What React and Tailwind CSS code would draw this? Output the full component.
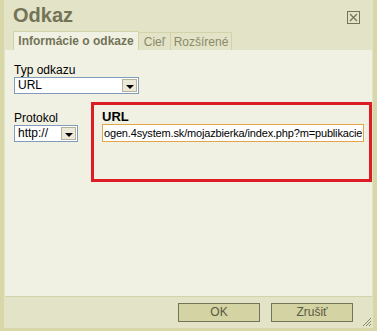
import React from 'react';

function Select({ value, width }) {
  return (
    <div
      className="flex items-stretch h-[17px] bg-white border border-[#7f9db9]"
      style={{ width }}
    >
      <div className="flex-1 pl-[3px] text-[12px] leading-[15px] text-black">{value}</div>
      <div className="w-[15px] my-[1px] mr-[1px] flex items-center justify-center bg-[#ece9d8] border border-[#b5b2a0]">
        <div className="w-0 h-0 border-l-[4px] border-r-[4px] border-t-[4px] border-l-transparent border-r-transparent border-t-black mt-[3px]" />
      </div>
    </div>
  );
}

export default function App() {
  return (
    <div
      className="w-[377px] h-[333px] bg-white overflow-hidden"
      style={{ fontFamily: '"Liberation Sans", Arial, sans-serif' }}
    >
      <div className="w-[377px] h-[331px] bg-[#e3e3c7] border-l-[4px] border-r-[4px] border-b-[3px] border-[#d7d7a9] flex flex-col">
        {/* title */}
        <div className="h-[31px] flex items-start justify-between pl-[9px] pr-[13px]">
          <div className="text-[20px] font-bold text-[#737357] leading-[24px] mt-[3px]">Odkaz</div>
          <div className="mt-[11px] w-[13px] h-[13px] border border-[#737357] flex items-center justify-center">
            <svg width="9" height="9" viewBox="0 0 9 9">
              <path d="M1 1L8 8M8 1L1 8" stroke="#737357" strokeWidth="1.2" />
            </svg>
          </div>
        </div>
        {/* tabs */}
        <div className="h-[19px] flex items-end pl-[9px] text-[12px] leading-[18px]">
          <div className="h-[19px] w-[126px] text-center bg-[#f1f1e3] border border-b-0 border-[#d3d3a9] font-bold text-[#737357]">
            Informácie o odkaze
          </div>
          <div className="h-[18px] w-[32px] text-center border border-b-0 border-l-0 border-[#d3d3a9] text-[#8a8a6a]">Cieľ</div>
          <div className="h-[18px] w-[61px] text-center border border-b-0 border-l-0 border-[#d3d3a9] text-[#8a8a6a]">Rozšírené</div>
        </div>
        {/* panel */}
        <div className="mx-[1px] h-[247px] bg-[#f1f1e3] border-b border-[#d3d3a9] pl-[9px] pt-[13px] text-[12px] text-black">
          <div className="leading-[14px]">Typ odkazu</div>
          <Select value="URL" width="125px" />
          <div className="flex mt-[8px]">
            <div className="pt-[9px]">
              <div className="leading-[14px]">Protokol</div>
              <Select value="http://" width="64px" />
            </div>
            <div className="ml-[13px] w-[281px] h-[80px] border-[3px] border-[#dd1c24] pl-[8px] pt-[5px]">
              <div className="font-bold text-[13px] leading-[14px] text-black">URL</div>
              <div className="w-[262px] h-[18px] bg-white border border-[#e2a54a] flex">
                <div className="whitespace-nowrap text-[11px] leading-[16px] tracking-[-0.16px] pl-[1px]">
                  ogen.4system.sk/mojazbierka/index.php?m=publikacie
                </div>
              </div>
            </div>
          </div>
        </div>
        {/* footer */}
        <div className="flex-1 relative flex items-start justify-end pr-[20px] pt-[6px] gap-[11px]">
          <button className="w-[82px] h-[19px] bg-[#d3d3a3] border border-[#737357] text-[12px] text-[#595942] leading-[15px]">
            OK
          </button>
          <button className="w-[82px] h-[19px] bg-[#d3d3a3] border border-[#737357] text-[12px] text-[#595942] leading-[15px]">
            Zrušiť
          </button>
          <svg className="absolute right-[1px] bottom-[1px]" width="11" height="11" viewBox="0 0 11 11">
            <path d="M10 2L2 10M10 5L5 10M10 8L8 10" stroke="#8a8a6a" strokeWidth="1" />
          </svg>
        </div>
      </div>
    </div>
  );
}
